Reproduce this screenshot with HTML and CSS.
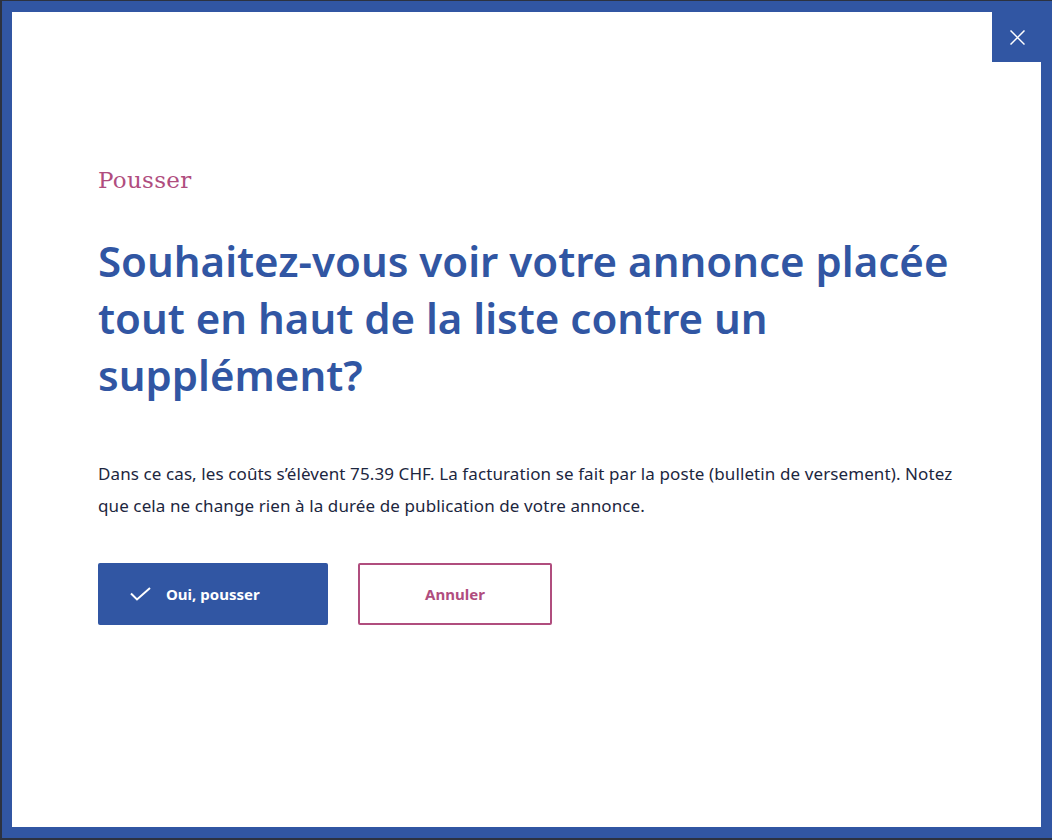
FILE: index.html
```html
<!DOCTYPE html>
<html lang="fr">
<head>
<meta charset="utf-8">
<title>Pousser</title>
<link rel="stylesheet" href="styles.css">
</head>
<body>
<div class="frame">
  <div class="modal">
    <button class="close" aria-label="Fermer">
      <svg width="15" height="15" viewBox="0 0 15 15"><path d="M0.5 0.5L14.5 14.5M14.5 0.5L0.5 14.5" stroke="#fff" stroke-width="1.5" fill="none"/></svg>
    </button>
    <div class="content">
      <p class="kicker">Pousser</p>
      <h1 class="title">Souhaitez-vous voir votre annonce placée tout en haut de la liste contre un supplément?</h1>
      <p class="text">Dans ce cas, les coûts s’élèvent 75.39 CHF. La facturation se fait par la poste (bulletin de versement). Notez que cela ne change rien à la durée de publication de votre annonce.</p>
      <div class="actions">
        <button class="btn btn-primary">
          <svg width="21" height="14" viewBox="0 0 21 14"><path d="M1 6.5L7 12.5L20 1" stroke="#fff" stroke-width="2" fill="none"/></svg>
          <span>Oui, pousser</span>
        </button>
        <button class="btn btn-secondary">Annuler</button>
      </div>
    </div>
  </div>
</div>
</body>
</html>
```
FILE: styles.css
```css
html, body {
  margin: 0;
  padding: 0;
}
body {
  background: #2c3240;
  width: 1052px;
  height: 840px;
  overflow: hidden;
}
.frame {
  margin: 1px 0 0 2px;
  height: 815px;
  padding: 11px 11px 11px 10px;
  background: #3156a3;
}
.modal {
  position: relative;
  background: #fff;
  height: 815px;
}
.close {
  position: absolute;
  top: 0;
  right: 0;
  width: 49px;
  height: 50px;
  border: 0;
  padding: 0;
  background: #3156a3;
  display: flex;
  align-items: center;
  justify-content: center;
  padding-left: 2px;
  cursor: pointer;
}
.content {
  padding: 152px 80px 0 86px;
}
.kicker {
  margin: 0;
  font-family: "DejaVu Serif", serif;
  font-size: 23px;
  letter-spacing: 0.3px;
  line-height: 32px;
  color: #b04d7e;
}
.title {
  margin: 36px 0 0;
  font-family: "Noto Sans", sans-serif;
  font-weight: 600;
  font-size: 42px;
  line-height: 57px;
  color: #3156a3;
}
.text {
  margin: 55px 0 0;
  font-family: "Noto Sans", sans-serif;
  font-size: 17px;
  letter-spacing: 0.1px;
  line-height: 32px;
  color: #1c2640;
}
.actions {
  display: flex;
  gap: 30px;
  margin-top: 41px;
}
.btn {
  height: 62px;
  font-family: "Noto Sans", sans-serif;
  font-weight: 700;
  font-size: 15px;
  cursor: pointer;
}
.btn-primary {
  width: 230px;
  border: 0;
  border-radius: 2px;
  background: #3156a3;
  color: #fff;
  display: flex;
  align-items: center;
  gap: 15px;
  padding: 0 0 0 32px;
}
.btn-secondary {
  width: 194px;
  border: 2px solid #b04d7e;
  border-radius: 2px;
  background: #fff;
  color: #b04d7e;
}
```
